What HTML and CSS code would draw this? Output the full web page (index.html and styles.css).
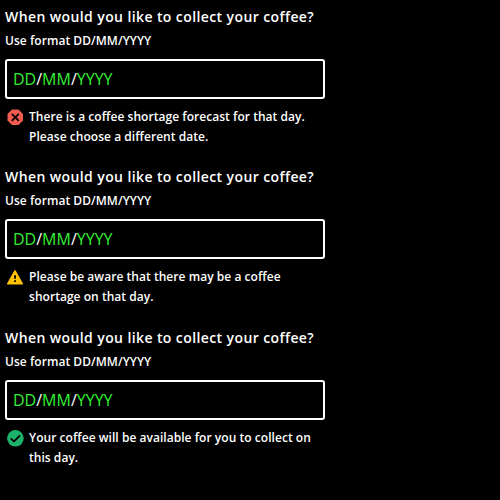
FILE: index.html
```
<!DOCTYPE html>
<html lang="en">
<head>
<meta charset="utf-8">
<title>Coffee collection</title>
<link rel="stylesheet" href="styles.css">
</head>
<body>
<main class="form">
<div class="field">
<label class="label" for="d1">When would you like to collect your coffee?</label>
<p class="hint">Use format DD/MM/YYYY</p>
<div class="input" id="d1"><span>DD</span>/<span>MM</span>/<span>YYYY</span></div>
<div class="message"><svg class="icon" viewBox="0 0 20 20"><path fill="#f15b50" d="M7 2.500h6.500L18 7v6.500L13.500 18H7L2.500 13.500V7z"/><path d="M6.800 6.800l7 7m0-7l-7 7" stroke="#000" stroke-width="1.700"/></svg><p>There is a coffee shortage forecast for that day. Please choose a different date.</p></div>
</div>
<div class="field">
<label class="label" for="d2">When would you like to collect your coffee?</label>
<p class="hint">Use format DD/MM/YYYY</p>
<div class="input" id="d2"><span>DD</span>/<span>MM</span>/<span>YYYY</span></div>
<div class="message"><svg class="icon" viewBox="0 0 20 20"><path fill="#ffc107" stroke="#ffc107" stroke-width="1.500" stroke-linejoin="round" d="M10 3.800L17.300 16.800H2.700z"/><path fill="#000" d="M9.100 8.300h1.800v3.400H9.100zM9.100 13.200h1.800v1.800H9.100z"/></svg><p>Please be aware that there may be a coffee shortage on that day.</p></div>
</div>
<div class="field">
<label class="label" for="d3">When would you like to collect your coffee?</label>
<p class="hint">Use format DD/MM/YYYY</p>
<div class="input" id="d3"><span>DD</span>/<span>MM</span>/<span>YYYY</span></div>
<div class="message"><svg class="icon" viewBox="0 0 20 20"><circle cx="10.400" cy="10.300" r="8.300" fill="#1bb36c"/><path d="M5.700 10.300l3.300 3.200 6-6.200" fill="none" stroke="#000" stroke-width="1.800"/></svg><p>Your coffee will be available for you to collect on this day.</p></div>
</div>
</main>
</body>
</html>
```
FILE: styles.css
```
body {
  margin: 0;
  background: #000;
  color: #fff;
  font-family: "Open Sans", sans-serif;
}
p { margin: 0; }
.form {
  width: 320px;
  padding: 7px 5px 0;
}
.field { margin-bottom: 20.4px; }
.label {
  display: block;
  font-size: 14px;
  line-height: 20px;
  font-weight: 600;
  letter-spacing: 0.4px;
}
.hint {
  margin-top: 4px;
  font-size: 12px;
  line-height: 20px;
  font-weight: 600;
  letter-spacing: 0.04px;
}
.input {
  box-sizing: border-box;
  height: 40px;
  margin-top: 8px;
  padding: 0 6px;
  border: 2px solid #fff;
  border-radius: 3px;
  font-size: 16px;
  line-height: 36px;
  font-weight: 400;
}
.input span { color: #33f033; }
.message {
  display: flex;
  gap: 4px;
  margin-top: 8px;
  font-size: 12px;
  line-height: 20px;
  font-weight: 600;
  letter-spacing: 0.04px;
}
.icon {
  flex: none;
  width: 20px;
  height: 20px;
}
```
